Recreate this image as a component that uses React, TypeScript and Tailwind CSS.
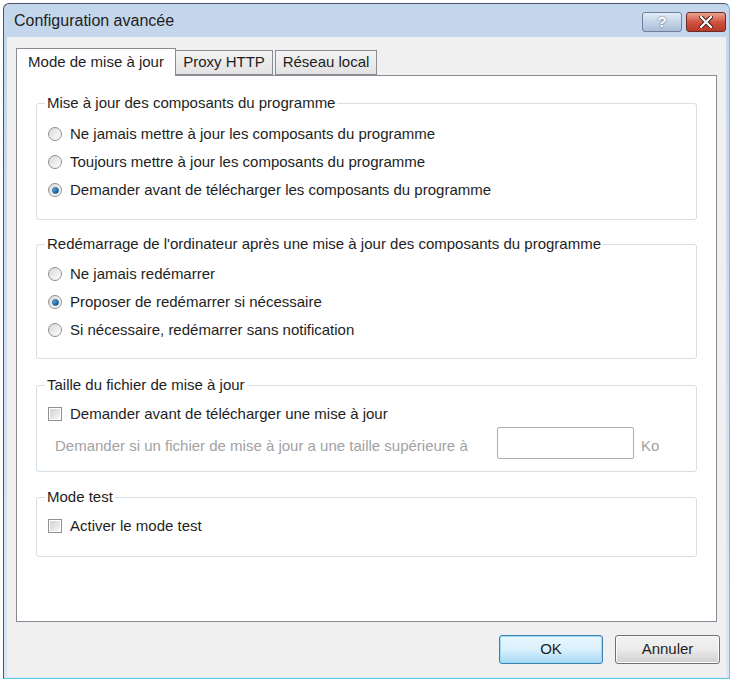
import React from 'react'

const font = { fontFamily: '"Liberation Sans", Arial, sans-serif' }

function Radio({ checked }: { checked?: boolean }) {
  return (
    <span className="relative flex h-[14px] w-[14px] shrink-0 items-center justify-center rounded-full border border-[#8c8f94] bg-gradient-to-br from-[#d4d5d7] via-[#f0f0f0] to-[#ffffff]">
      <span className="h-[10px] w-[10px] rounded-full bg-gradient-to-br from-[#dcdcdc] to-[#fafafa]" />
      {checked && (
        <span className="absolute h-[7px] w-[7px] rounded-full border border-[#1c5a8c] bg-gradient-to-br from-[#7ac2ee] via-[#2a7ec2] to-[#1b4f86]" />
      )}
    </span>
  )
}

function Checkbox() {
  return (
    <span className="flex h-[14px] w-[14px] shrink-0 items-center justify-center border border-[#8c8f94] bg-white">
      <span className="h-[10px] w-[10px] bg-gradient-to-br from-[#cfd0d2] to-[#f7f7f7]" />
    </span>
  )
}

function Group({ title, className, children }: { title: string; className?: string; children: React.ReactNode }) {
  return (
    <fieldset className={`w-[661px] rounded-[3px] border border-[#d5dfe5] ${className ?? ''}`}>
      <legend className="ml-[8px] px-[2px] text-[15px] leading-[16px] text-[#1e1e1e]">{title}</legend>
      {children}
    </fieldset>
  )
}

function RadioRow({ label, checked }: { label: string; checked?: boolean }) {
  return (
    <div className="flex h-[28px] items-center gap-[8px] pl-[11px] text-[15px] text-[#1e1e1e]">
      <Radio checked={checked} />
      <span>{label}</span>
    </div>
  )
}

export default function App() {
  return (
    <div className="h-[679px] w-[731px] bg-white pl-[3px] pt-[3px]" style={font}>
      <div className="flex h-[676px] w-[727px] flex-col rounded-t-[6px] border border-[#4b5562] border-b-[#5ec9e6] border-r-[#5ec9e6] bg-gradient-to-b from-[#c3d6ec] to-[#dbe6f3]">
        {/* title bar */}
        <div className="flex h-[33px] shrink-0 items-center pl-[10px] pr-[3px]">
          <span className="text-[16px] text-[#1e1e1e]">Configuration avancée</span>
          <div className="ml-auto flex items-center gap-[4px] self-start pt-[8px]">
            <div className="flex h-[20px] w-[40px] items-center justify-center rounded-[3px] border border-[#6e8098] bg-gradient-to-b from-[#e4edf7] via-[#c5d5e8] to-[#a9bdd8] text-[15px] font-bold text-white [text-shadow:0_0_2px_#39475a]">
              ?
            </div>
            <div className="flex h-[20px] w-[40px] items-center justify-center rounded-[3px] border border-[#6b2a23] bg-gradient-to-b from-[#e8a493] via-[#d0533f] to-[#b8382a]">
              <svg width="14" height="12" viewBox="0 0 14 12">
                <path d="M2 1 L12 11 M12 1 L2 11" stroke="#3d1410" strokeWidth="4" strokeLinecap="square" />
                <path d="M2 1 L12 11 M12 1 L2 11" stroke="#ffffff" strokeWidth="2.2" strokeLinecap="square" />
              </svg>
            </div>
          </div>
        </div>

        {/* body */}
        <div className="mx-[3px] mb-[1px] flex flex-1 flex-col bg-[#f0f0f0]">
          {/* tabs */}
          <div className="flex items-end pl-[9px] pt-[11px]">
            <div className="relative z-10 -mb-px flex h-[28px] w-[160px] items-center justify-center border border-b-0 border-[#898c95] bg-white text-[15px] text-[#1e1e1e]">
              Mode de mise à jour
            </div>
            <div className="flex h-[25px] w-[97px] items-center justify-center border border-l-0 border-[#898c95] bg-gradient-to-b from-[#f4f4f4] to-[#e2e2e2] text-[15px] text-[#1e1e1e]">
              Proxy HTTP
            </div>
            <div className="ml-[2px] flex h-[25px] w-[102px] items-center justify-center border border-[#898c95] bg-gradient-to-b from-[#f4f4f4] to-[#e2e2e2] text-[15px] text-[#1e1e1e]">
              Réseau local
            </div>
          </div>

          {/* panel */}
          <div className="ml-[9px] h-[547px] w-[701px] border border-[#898c95] bg-white pl-[19px] pt-[19px]">
            <Group title="Mise à jour des composants du programme" className="pb-[15px]">
              <div className="pt-[9px]">
                <RadioRow label="Ne jamais mettre à jour les composants du programme" />
                <RadioRow label="Toujours mettre à jour les composants du programme" />
                <RadioRow label="Demander avant de télécharger les composants du programme" checked />
              </div>
            </Group>

            <Group title="Redémarrage de l'ordinateur après une mise à jour des composants du programme" className="mt-[16px] pb-[14px]">
              <div className="pt-[8px]">
                <div className="flex flex-col gap-[-1px]">
                  <RadioRow label="Ne jamais redémarrer" />
                  <RadioRow label="Proposer de redémarrer si nécessaire" checked />
                  <RadioRow label="Si nécessaire, redémarrer sans notification" />
                </div>
              </div>
            </Group>

            <Group title="Taille du fichier de mise à jour" className="mt-[18px] pb-[12px]">
              <div className="pt-[9px]">
                <div className="flex h-[24px] items-center gap-[8px] pl-[11px] text-[15px] text-[#1e1e1e]">
                  <Checkbox />
                  <span>Demander avant de télécharger une mise à jour</span>
                </div>
                <div className="mt-[1px] flex h-[32px] items-center pl-[18px] text-[15px] text-[#a2a2a2]">
                  <span className="pt-[6px]">Demander si un fichier de mise à jour a une taille supérieure à</span>
                  <div className="ml-auto h-[32px] w-[137px] rounded-[2px] border border-[#abadb3] bg-white" />
                  <span className="ml-[7px] mr-[35px] w-[20px] pt-[6px]">Ko</span>
                </div>
              </div>
            </Group>

            <Group title="Mode test" className="mt-[17px] pb-[18px]">
              <div className="pt-[9px]">
                <div className="flex h-[24px] items-center gap-[8px] pl-[11px] text-[15px] text-[#1e1e1e]">
                  <Checkbox />
                  <span>Activer le mode test</span>
                </div>
              </div>
            </Group>
          </div>

          {/* buttons */}
          <div className="mt-[13px] flex justify-end gap-[12px] pr-[6px]">
            <button className="h-[29px] w-[104px] rounded-[3px] border border-[#3c7fb1] bg-gradient-to-b from-[#eaf6fd] via-[#d9f0fc] to-[#a7d9f5] text-[15px] text-[#1e1e1e] shadow-[inset_0_0_0_1px_#9edcf5]">
              OK
            </button>
            <button className="h-[29px] w-[105px] rounded-[3px] border border-[#707070] bg-gradient-to-b from-[#f2f2f2] via-[#ebebeb] to-[#cfcfcf] text-[15px] text-[#1e1e1e] shadow-[inset_0_0_0_1px_#fcfcfc]">
              Annuler
            </button>
          </div>
        </div>
      </div>
    </div>
  )
}
